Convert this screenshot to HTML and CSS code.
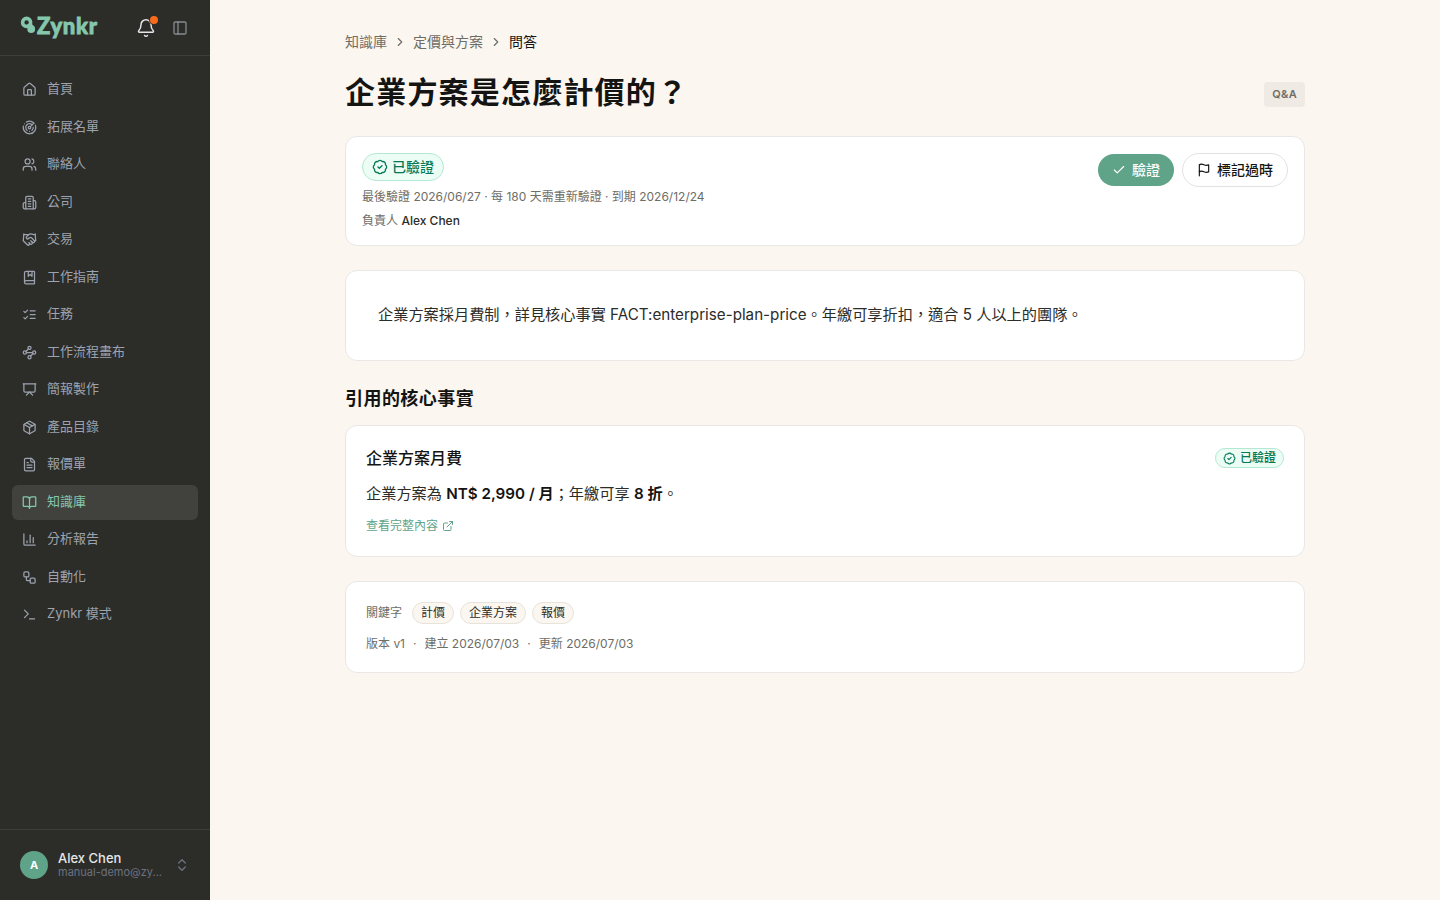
FILE: index.html
```html
<!DOCTYPE html>
<html lang="zh-Hant">

<head>
  <meta charset="utf-8">
  <title>企業方案是怎麼計價的？ - Zynkr</title>
  <link rel="stylesheet" href="styles.css">
</head>

<body>
  <div class="app">
    <!-- Sidebar -->
    <aside class="sidebar">
      <div class="sidebar-header">
        <a class="logo">
          <svg class="logo-mark" viewBox="0 0 16 18"><circle cx="6.6" cy="6.4" r="4" fill="none" stroke="currentColor" stroke-width="3.6"/><circle cx="11.2" cy="13" r="3.9" fill="currentColor"/><path d="M9.4 7.5l2.6 5" stroke="currentColor" stroke-width="4.4"/></svg>
          <span class="logo-text">Zynkr</span>
        </a>
        <div class="header-actions">
          <div class="bell">
            <svg class="icon" viewBox="0 0 24 24"><path d="M10.268 21a2 2 0 0 0 3.464 0"/><path d="M3.262 15.326A1 1 0 0 0 4 17h16a1 1 0 0 0 .74-1.673C19.41 13.956 18 12.499 18 8A6 6 0 0 0 6 8c0 4.499-1.411 5.956-2.738 7.326"/></svg>
            <span class="bell-dot"></span>
          </div>
          <svg class="icon panel-toggle" viewBox="0 0 24 24"><rect width="18" height="18" x="3" y="3" rx="2"/><path d="M9 3v18"/></svg>
        </div>
      </div>

      <nav class="nav">
        <a class="nav-item">
          <svg class="icon" viewBox="0 0 24 24"><path d="M15 21v-8a1 1 0 0 0-1-1h-4a1 1 0 0 0-1 1v8"/><path d="M3 10a2 2 0 0 1 .709-1.528l7-5.999a2 2 0 0 1 2.582 0l7 5.999A2 2 0 0 1 21 10v9a2 2 0 0 1-2 2H5a2 2 0 0 1-2-2z"/></svg>
          <span>首頁</span>
        </a>
        <a class="nav-item">
          <svg class="icon" viewBox="0 0 24 24"><path d="M19.07 4.93A10 10 0 0 0 6.99 3.34"/><path d="M4 6h.01"/><path d="M2.29 9.62A10 10 0 1 0 21.31 8.35"/><path d="M16.24 7.76A6 6 0 1 0 8.23 16.67"/><path d="M12 18h.01"/><path d="M17.99 11.66A6 6 0 0 1 15.77 16.67"/><circle cx="12" cy="12" r="2"/><path d="m13.41 10.59 5.66-5.66"/></svg>
          <span>拓展名單</span>
        </a>
        <a class="nav-item">
          <svg class="icon" viewBox="0 0 24 24"><path d="M16 21v-2a4 4 0 0 0-4-4H6a4 4 0 0 0-4 4v2"/><circle cx="9" cy="7" r="4"/><path d="M22 21v-2a4 4 0 0 0-3-3.87"/><path d="M16 3.13a4 4 0 0 1 0 7.75"/></svg>
          <span>聯絡人</span>
        </a>
        <a class="nav-item">
          <svg class="icon" viewBox="0 0 24 24"><path d="M6 22V4a2 2 0 0 1 2-2h8a2 2 0 0 1 2 2v18Z"/><path d="M6 12H4a2 2 0 0 0-2 2v6a2 2 0 0 0 2 2h2"/><path d="M18 9h2a2 2 0 0 1 2 2v9a2 2 0 0 1-2 2h-2"/><path d="M10 6h4"/><path d="M10 10h4"/><path d="M10 14h4"/><path d="M10 18h4"/></svg>
          <span>公司</span>
        </a>
        <a class="nav-item">
          <svg class="icon" viewBox="0 0 24 24"><path d="m11 17 2 2a1 1 0 1 0 3-3"/><path d="m14 14 2.5 2.5a1 1 0 1 0 3-3l-3.88-3.88a3 3 0 0 0-4.24 0l-.88.88a1 1 0 1 1-3-3l2.81-2.81a5.79 5.79 0 0 1 7.06-.87l.47.28a2 2 0 0 0 1.42.25L21 4"/><path d="m21 3 1 11h-2"/><path d="M3 3 2 14l6.5 6.5a1 1 0 1 0 3-3"/><path d="M3 4h8"/></svg>
          <span>交易</span>
        </a>
        <a class="nav-item">
          <svg class="icon" viewBox="0 0 24 24"><path d="M10 2v8l3-3 3 3V2"/><path d="M4 19.5v-15A2.5 2.5 0 0 1 6.5 2H19a1 1 0 0 1 1 1v18a1 1 0 0 1-1 1H6.5a1 1 0 0 1 0-5H20"/></svg>
          <span>工作指南</span>
        </a>
        <a class="nav-item">
          <svg class="icon" viewBox="0 0 24 24"><path d="m3 17 2 2 4-4"/><path d="m3 7 2 2 4-4"/><path d="M13 6h8"/><path d="M13 12h8"/><path d="M13 18h8"/></svg>
          <span>任務</span>
        </a>
        <a class="nav-item">
          <svg class="icon" viewBox="0 0 24 24"><circle cx="12" cy="4.5" r="2.5"/><path d="m10.2 6.3-3.9 3.9"/><circle cx="4.5" cy="12" r="2.5"/><path d="M7 12h10"/><circle cx="19.5" cy="12" r="2.5"/><path d="m13.8 17.7 3.9-3.9"/><circle cx="12" cy="19.5" r="2.5"/></svg>
          <span>工作流程畫布</span>
        </a>
        <a class="nav-item">
          <svg class="icon" viewBox="0 0 24 24"><path d="M2 3h20"/><path d="M21 3v11a2 2 0 0 1-2 2H5a2 2 0 0 1-2-2V3"/><path d="m7 21 5-5 5 5"/></svg>
          <span>簡報製作</span>
        </a>
        <a class="nav-item">
          <svg class="icon" viewBox="0 0 24 24"><path d="M11 21.73a2 2 0 0 0 2 0l7-4A2 2 0 0 0 21 16V8a2 2 0 0 0-1-1.73l-7-4a2 2 0 0 0-2 0l-7 4A2 2 0 0 0 3 8v8a2 2 0 0 0 1 1.73z"/><path d="M12 22V12"/><path d="m3.3 7 8.7 5 8.7-5"/><path d="m7.5 4.27 9 5.15"/></svg>
          <span>產品目錄</span>
        </a>
        <a class="nav-item">
          <svg class="icon" viewBox="0 0 24 24"><path d="M15 2H6a2 2 0 0 0-2 2v16a2 2 0 0 0 2 2h12a2 2 0 0 0 2-2V7Z"/><path d="M14 2v4a2 2 0 0 0 2 2h4"/><path d="M10 9H8"/><path d="M16 13H8"/><path d="M16 17H8"/></svg>
          <span>報價單</span>
        </a>
        <a class="nav-item active">
          <svg class="icon" viewBox="0 0 24 24"><path d="M12 7v14"/><path d="M3 18a1 1 0 0 1-1-1V4a1 1 0 0 1 1-1h5a4 4 0 0 1 4 4 4 4 0 0 1 4-4h5a1 1 0 0 1 1 1v13a1 1 0 0 1-1 1h-6a3 3 0 0 0-3 3 3 3 0 0 0-3-3z"/></svg>
          <span>知識庫</span>
        </a>
        <a class="nav-item">
          <svg class="icon" viewBox="0 0 24 24"><path d="M3 3v16a2 2 0 0 0 2 2h16"/><path d="M18 17V9"/><path d="M13 17V5"/><path d="M8 17v-3"/></svg>
          <span>分析報告</span>
        </a>
        <a class="nav-item">
          <svg class="icon" viewBox="0 0 24 24"><rect width="8" height="8" x="3" y="3" rx="2"/><path d="M7 11v4a2 2 0 0 0 2 2h4"/><rect width="8" height="8" x="13" y="13" rx="2"/></svg>
          <span>自動化</span>
        </a>
        <a class="nav-item">
          <svg class="icon" viewBox="0 0 24 24"><path d="m4 17 6-6-6-6"/><path d="M12 19h8"/></svg>
          <span>Zynkr 模式</span>
        </a>
      </nav>

      <div class="user">
        <div class="avatar">A</div>
        <div class="user-info">
          <div class="user-name">Alex Chen</div>
          <div class="user-email">manual-demo@zy...</div>
        </div>
        <svg class="icon user-chevrons" viewBox="0 0 24 24"><path d="m7 15 5 5 5-5"/><path d="m7 9 5-5 5 5"/></svg>
      </div>
    </aside>

    <!-- Article -->
    <main class="main">
      <div class="content">
        <div class="breadcrumb">
          <span>知識庫</span>
          <svg class="icon" viewBox="0 0 24 24"><path d="m9 18 6-6-6-6"/></svg>
          <span>定價與方案</span>
          <svg class="icon" viewBox="0 0 24 24"><path d="m9 18 6-6-6-6"/></svg>
          <span class="current">問答</span>
        </div>

        <div class="title-row">
          <h1>企業方案是怎麼計價的？</h1>
          <span class="type-tag">Q&amp;A</span>
        </div>

        <section class="card verify-card">
          <div class="verify-info">
            <span class="badge">
              <svg class="icon" viewBox="0 0 24 24"><path d="M3.85 8.62a4 4 0 0 1 4.78-4.77 4 4 0 0 1 6.74 0 4 4 0 0 1 4.78 4.78 4 4 0 0 1 0 6.74 4 4 0 0 1-4.77 4.78 4 4 0 0 1-6.75 0 4 4 0 0 1-4.78-4.77 4 4 0 0 1 0-6.76Z"/><path d="m9 12 2 2 4-4"/></svg>
              <span>已驗證</span>
            </span>
            <p class="meta">最後驗證 2026/06/27 · 每 180 天需重新驗證 · 到期 2026/12/24</p>
            <p class="meta">負責人 <span class="owner">Alex Chen</span></p>
          </div>
          <div class="actions">
            <button class="btn btn-primary">
              <svg class="icon" viewBox="0 0 24 24"><path d="M20 6 9 17l-5-5"/></svg>
              <span>驗證</span>
            </button>
            <button class="btn btn-outline">
              <svg class="icon" viewBox="0 0 24 24"><path d="M4 15s1-1 4-1 5 2 8 2 4-1 4-1V3s-1 1-4 1-5-2-8-2-4 1-4 1z"/><path d="M4 22v-7"/></svg>
              <span>標記過時</span>
            </button>
          </div>
        </section>

        <section class="card body-card">
          <p>企業方案採月費制，詳見核心事實 FACT:enterprise-plan-price。年繳可享折扣，適合 5 人以上的團隊。</p>
        </section>

        <h2>引用的核心事實</h2>

        <section class="card fact-card">
          <div class="fact-head">
            <h3>企業方案月費</h3>
            <span class="badge badge-small">
              <svg class="icon" viewBox="0 0 24 24"><path d="M3.85 8.62a4 4 0 0 1 4.78-4.77 4 4 0 0 1 6.74 0 4 4 0 0 1 4.78 4.78 4 4 0 0 1 0 6.74 4 4 0 0 1-4.77 4.78 4 4 0 0 1-6.75 0 4 4 0 0 1-4.78-4.77 4 4 0 0 1 0-6.76Z"/><path d="m9 12 2 2 4-4"/></svg>
              <span>已驗證</span>
            </span>
          </div>
          <p class="fact-text">企業方案為 <strong>NT$ 2,990 / 月</strong>；年繳可享 <strong>8 折</strong>。</p>
          <a class="fact-link">
            查看完整內容
            <svg class="icon" viewBox="0 0 24 24"><path d="M15 3h6v6"/><path d="M10 14 21 3"/><path d="M18 13v6a2 2 0 0 1-2 2H5a2 2 0 0 1-2-2V8a2 2 0 0 1 2-2h6"/></svg>
          </a>
        </section>

        <section class="card info-card">
          <div class="keywords">
            <span class="keywords-label">關鍵字</span>
            <span class="chip">計價</span>
            <span class="chip">企業方案</span>
            <span class="chip">報價</span>
          </div>
          <div class="versions">
            <span>版本 v1</span>
            <span>·</span>
            <span>建立 2026/07/03</span>
            <span>·</span>
            <span>更新 2026/07/03</span>
          </div>
        </section>
      </div>
    </main>
  </div>
</body>

</html>
```
FILE: styles.css
```css
* {
  box-sizing: border-box;
}

body {
  margin: 0;
  font-family: Inter, "Noto Sans CJK TC", sans-serif;
  font-size: 14px;
  color: #141412;
  background: #fbf6f0;
}

h1, h2, h3, p {
  margin: 0;
}

.icon {
  fill: none;
  stroke: currentColor;
  stroke-width: 2;
  stroke-linecap: round;
  stroke-linejoin: round;
  flex-shrink: 0;
}

.app {
  display: flex;
  height: 100vh;
}

/* Sidebar */
.sidebar {
  display: flex;
  flex-direction: column;
  width: 210px;
  flex-shrink: 0;
  background: #2c2c28;
  color: #9ca3af;
}

.sidebar-header {
  display: flex;
  align-items: center;
  justify-content: space-between;
  height: 56px;
  padding: 0 22px 0 20px;
  border-bottom: 1px solid #3d3d39;
}

.logo {
  display: flex;
  align-items: flex-start;
  gap: 1px;
  height: 23px;
  color: #84c7ad;
}

.logo-mark {
  width: 16px;
  height: 18px;
}

.logo-text {
  margin-top: 1px;
  font-family: Lato, sans-serif;
  font-size: 22px;
  line-height: 18px;
  font-weight: 900;
  letter-spacing: 0.7px;
  -webkit-text-stroke: 0.8px #84c7ad;
}

.header-actions {
  display: flex;
  align-items: center;
  gap: 16px;
}

.bell {
  position: relative;
  width: 20px;
  height: 20px;
  color: #e5e7eb;
}

.bell .icon {
  display: block;
  width: 20px;
  height: 20px;
  stroke-width: 1.75;
}

.bell-dot {
  position: absolute;
  top: -2px;
  right: -2px;
  width: 8px;
  height: 8px;
  border-radius: 50%;
  background: #f96b1b;
  box-shadow: 0 0 0 1px #2c2c28;
}

.panel-toggle {
  width: 16px;
  height: 16px;
  color: #858b93;
}

.nav {
  display: flex;
  flex-direction: column;
  gap: 2px;
  flex: 1;
  padding: 16px 12px;
}

.nav-item {
  display: flex;
  align-items: center;
  gap: 10px;
  height: 35.5px;
  padding: 0 10px;
  border-radius: 6px;
  font-size: 13px;
  line-height: 19.5px;
}

.nav-item .icon {
  width: 15px;
  height: 15px;
}

.nav-item span {
  margin-bottom: 2px;
}

.nav-item.active {
  background: #41413d;
  color: #84c7ad;
}

.user {
  display: flex;
  align-items: center;
  gap: 10px;
  height: 71px;
  padding: 0 20px;
  border-top: 1px solid #3d3d39;
}

.avatar {
  display: flex;
  align-items: center;
  justify-content: center;
  width: 28px;
  height: 28px;
  border-radius: 50%;
  background: #5fa389;
  color: #fff;
  font-size: 11px;
  font-weight: 700;
}

.user-info {
  width: 106px;
}

.user-name {
  font-size: 13px;
  line-height: 14px;
  font-weight: 500;
  color: #e5e7eb;
}

.user-email {
  white-space: nowrap;
  font-size: 11px;
  line-height: 14px;
  color: #6b7280;
}

.user-chevrons {
  width: 16px;
  height: 16px;
  color: #6b7280;
}

/* Article */
.main {
  flex: 1;
  padding: 32px 0;
}

.content {
  width: 960px;
  margin: 0 auto;
}

.breadcrumb {
  display: flex;
  align-items: center;
  gap: 6px;
  line-height: 20px;
  color: #6e6d66;
}

.breadcrumb .icon {
  width: 14px;
  height: 14px;
}

.breadcrumb .current {
  color: #141412;
}

.title-row {
  display: flex;
  align-items: center;
  justify-content: space-between;
  height: 45px;
  margin: 18px 0 21px;
}

h1 {
  font-size: 30px;
  line-height: 45px;
  font-weight: 700;
  letter-spacing: 1.2px;
}

.type-tag {
  height: 25px;
  padding: 0 8px;
  margin-top: 3px;
  border-radius: 4px;
  background: #efeae4;
  color: #6e6d66;
  font-size: 11px;
  line-height: 25px;
  font-weight: 600;
  letter-spacing: 0.3px;
}

.card {
  border: 1px solid #e9e8e6;
  border-radius: 12px;
  background: #fff;
}

.verify-card {
  display: flex;
  justify-content: space-between;
  align-items: flex-start;
  height: 110px;
  padding: 16px;
}

.badge {
  display: inline-flex;
  align-items: center;
  gap: 4px;
  height: 28px;
  padding: 0 9px;
  border: 1px solid #b5e8d3;
  border-radius: 14px;
  background: #ebfdf5;
  color: #047857;
  font-size: 14px;
  line-height: 20px;
  font-weight: 500;
}

.badge .icon {
  width: 16px;
  height: 16px;
}

.badge-small {
  gap: 4px;
  height: 20px;
  padding: 0 7px;
  font-size: 12px;
  line-height: 16px;
}

.badge-small .icon {
  width: 13px;
  height: 13px;
}

.verify-info {
  display: flex;
  flex-direction: column;
  align-items: flex-start;
  gap: 8px;
}

.meta {
  font-size: 12px;
  line-height: 16px;
  color: #6e6d66;
}

.owner {
  font-weight: 500;
  color: #2c2c28;
}

.actions {
  display: flex;
  align-items: center;
  gap: 8px;
}

.btn {
  display: flex;
  align-items: center;
  gap: 6px;
  height: 32px;
  padding: 0 14px;
  border: 0;
  border-radius: 17px;
  font-family: inherit;
  font-size: 14px;
  line-height: 20px;
  font-weight: 500;
}

.btn .icon {
  width: 14px;
  height: 14px;
}

.btn-primary {
  background: #5fa389;
  color: #fff;
}

.btn-outline {
  height: 34px;
  border: 1px solid #e2e2e2;
  background: #fff;
  color: #141412;
}

.body-card {
  margin-top: 24px;
  padding: 31px 32px 33px;
}

.body-card p {
  font-size: 15.2px;
  line-height: 25px;
  color: #2c2c28;
}

h2 {
  margin: 25px 0 13px;
  font-size: 18px;
  line-height: 26px;
  font-weight: 600;
  letter-spacing: 0.45px;
}

.fact-card {
  height: 132px;
  padding: 20px;
}

.fact-head {
  display: flex;
  align-items: center;
  justify-content: space-between;
}

h3 {
  font-size: 16px;
  line-height: 24px;
  font-weight: 500;
}

.fact-text {
  margin-top: 11px;
  font-size: 15.2px;
  line-height: 25px;
  color: #2c2c28;
}

.fact-text strong {
  font-weight: 600;
  color: #141412;
}

.fact-link {
  display: flex;
  align-items: center;
  gap: 4px;
  margin-top: 11px;
  font-size: 12px;
  line-height: 18px;
  color: #5fa389;
}

.fact-link .icon {
  width: 12px;
  height: 12px;
}

.info-card {
  display: flex;
  flex-direction: column;
  gap: 12px;
  margin-top: 24px;
  padding: 20px;
  font-size: 12px;
  color: #6e6d66;
}

.keywords {
  display: flex;
  align-items: center;
  gap: 6px;
}

.keywords-label {
  margin-right: 4px;
  line-height: 16px;
}

.chip {
  height: 22px;
  padding: 0 8px;
  border: 1px solid #e8e3da;
  border-radius: 11px;
  background: #fbf6f0;
  color: #2c2c28;
  line-height: 20px;
}

.versions {
  display: flex;
  gap: 8px;
  line-height: 16px;
}
```
